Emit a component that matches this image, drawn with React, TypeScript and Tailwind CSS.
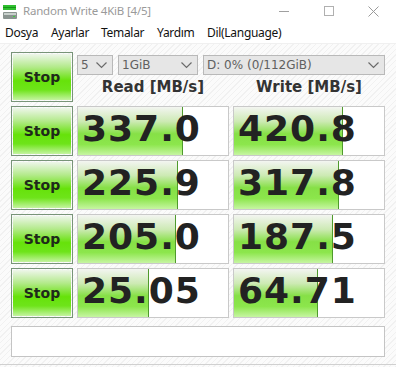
import React from "react";

const rows = [
  { r: "337.0", w: "420.8", rf: 105, wf: 109 },
  { r: "225.9", w: "317.8", rf: 100, wf: 105 },
  { r: "205.0", w: "187.5", rf: 98, wf: 99 },
  { r: "25.05", w: "64.71", rf: 71, wf: 84 },
];

function StopButton() {
  return (
    <div className="h-[50px] w-[62px] border border-[#789478] p-px">
      <div className="flex h-full w-full items-center justify-center bg-[linear-gradient(to_bottom,#eef6ea_0%,#b4ea8c_28%,#66e20a_58%,#6ee41a_78%,#c4f4a0_100%)] pb-[1px]">
        <span className="font-['DejaVu_Sans',sans-serif] text-[14px] font-bold leading-none text-[#1e2a1a]">Stop</span>
      </div>
    </div>
  );
}

function Result({ value, fill }: { value: string; fill: number }) {
  return (
    <div className="relative h-[50px] w-[152px] border border-[#c9c9c9] bg-white">
      <div
        className="absolute bottom-0 left-0 top-0 border-r border-[#4f9a2c] bg-[linear-gradient(to_bottom,#f3f5f1_0%,#cdeab4_30%,#86e046_56%,#8ce64c_78%,#c6f5a2_100%)]"
        style={{ width: fill }}
      />
      <div className="relative flex h-full items-center pb-[4px] pl-[4px] font-['DejaVu_Sans',sans-serif] text-[36px] font-bold leading-none tracking-[1px] text-[#222]">
        {value}
      </div>
    </div>
  );
}

function Select({ w, text }: { w: number; text: string }) {
  return (
    <div
      className="flex h-[20px] items-center justify-between border border-[#b9b9b9] bg-[#e6e6e6] pl-[3px] pr-[5px] font-['DejaVu_Sans',sans-serif] text-[12px] text-[#606060]"
      style={{ width: w }}
    >
      <span className="leading-none">{text}</span>
      <svg width="11" height="7" viewBox="0 0 11 7">
        <path d="M0.5 0.5 L5.5 5.5 L10.5 0.5" fill="none" stroke="#6a6a6a" strokeWidth="1.2" />
      </svg>
    </div>
  );
}

export default function App() {
  return (
    <div className="h-[367px] w-[396px] overflow-hidden bg-white font-['Noto_Sans',sans-serif]">
      {/* title bar */}
      <div className="flex h-[22px] items-center">
        <svg className="ml-[2px] mt-[1px]" width="16" height="16" viewBox="0 0 16 16">
          <rect x="1" y="1" width="13" height="5" fill="#2fbf2f" />
          <rect x="1" y="3" width="13" height="1" fill="#179417" />
          <rect x="1" y="8" width="14" height="7" rx="1" fill="#8a9490" />
          <rect x="2" y="9" width="12" height="2" fill="#c8d0cc" />
          <rect x="11" y="12" width="2" height="1" fill="#3ad03a" />
        </svg>
        <span className="ml-[5px] text-[11.5px] leading-none tracking-[-0.2px] text-[#9a9a9a]">Random Write 4KiB [4/5]</span>
        <div className="ml-auto flex h-full items-center">
          <div className="flex w-[45px] justify-center">
            <div className="h-px w-[10px] bg-[#a0a0a0]" />
          </div>
          <div className="flex w-[45px] justify-center">
            <div className="h-[10px] w-[10px] border border-[#b0b0b0]" />
          </div>
          <div className="flex w-[45px] justify-center">
            <svg width="11" height="11" viewBox="0 0 11 11">
              <path d="M0.5 0.5 L10.5 10.5 M10.5 0.5 L0.5 10.5" stroke="#9a9a9a" strokeWidth="1" />
            </svg>
          </div>
        </div>
      </div>
      {/* menu */}
      <div className="flex h-[21px] items-center whitespace-nowrap text-[12px] leading-none tracking-[-0.3px] text-[#111]">
        <span className="ml-[5px] w-[46px]">Dosya</span>
        <span className="w-[50px]">Ayarlar</span>
        <span className="w-[56px]">Temalar</span>
        <span className="w-[50px]">Yardım</span>
        <span>Dil(Language)</span>
      </div>
      {/* content */}
      <div className="h-[324px] border-t border-[#f0f0f0] bg-[#fbfbfb] bg-[repeating-linear-gradient(135deg,#fbfbfb_0px,#fbfbfb_3px,#f1f1f1_3px,#f1f1f1_4px)] pl-[11px] pt-[8px]">
        <div className="grid grid-cols-[62px_152px_152px] gap-x-[4px] gap-y-[4px]">
          <StopButton />
          <div className="col-span-2 flex flex-col">
            <div className="mt-[3px] flex">
              <Select w={36} text="5" />
              <div className="w-[5px]" />
              <Select w={80} text="1GiB" />
              <div className="w-[5px]" />
              <Select w={182} text="D: 0% (0/112GiB)" />
            </div>
            <div className="mt-[5px] flex font-['DejaVu_Sans',sans-serif] text-[15px] font-bold leading-none text-[#333]">
              <div className="w-[152px] text-center">Read [MB/s]</div>
              <div className="w-[4px]" />
              <div className="w-[152px] text-center">Write [MB/s]</div>
            </div>
          </div>
          {rows.map((row, i) => (
            <React.Fragment key={i}>
              <StopButton />
              <Result value={row.r} fill={row.rf} />
              <Result value={row.w} fill={row.wf} />
            </React.Fragment>
          ))}
        </div>
        <div className="mt-[8px] h-[31px] w-[374px] border border-[#c4c4c4] bg-white" />
        <div className="mt-[7px] -ml-[11px] h-px w-[396px] bg-[#d0d0d0]" />
      </div>
    </div>
  );
}
